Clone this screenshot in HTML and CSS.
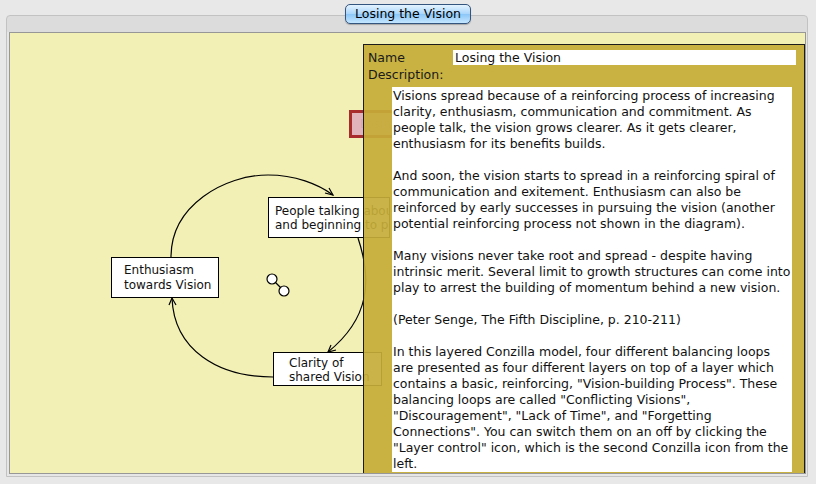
FILE: index.html
```html
<!DOCTYPE html>
<html lang="en">
<head>
<meta charset="UTF-8" />
<title>Losing the Vision</title>
<link rel="stylesheet" href="styles.css">
</head>
<body>
<div class="tab-row">
    <div class="tab">Losing the Vision</div>
</div>
<div class="group">
    <div class="canvas">
        <!-- links drawn in page coordinates -->
        <svg class="links" width="800" height="440">
            <g transform="translate(-10,-33)" fill="none" stroke="#000" stroke-width="1.2">
                <path d="M171,257 C171,205 225,175 268,175 C295,175 318,184 333,195"/>
                <polyline points="325,193 333,195 329,188"/>
                <path d="M358,238 C372,280 370,318 328,352"/>
                <polyline points="331,345 328,352 336,350"/>
                <path d="M273,377 C218,377 174,350 172,298"/>
                <polyline points="176,305 172,298 169,305"/>
                <line x1="272" y1="279" x2="284" y2="291"/>
                <circle cx="272" cy="279" r="5" fill="#fff"/>
                <circle cx="284" cy="291" r="5" fill="#fff"/>
            </g>
        </svg>

        <div class="node n-losing">Losing the Vision</div>
        <div class="node n-people">People talking about it<br>and beginning to pursue it</div>
        <div class="node n-enth">Enthusiasm<br>towards Vision</div>
        <div class="node n-clarity">Clarity of<br>shared Vision</div>

        <div class="info">
            <div class="name-row">
                <span class="label name-label">Name</span>
                <div class="name-field">Losing the Vision</div>
            </div>
            <div class="label">Description:</div>
            <div class="desc">
                <p>Visions spread because of a reinforcing process of increasing<br>clarity, enthusiasm, communication and commitment. As<br>people talk, the vision grows clearer. As it gets clearer,<br>enthusiasm for its benefits builds.</p>
                <p>And soon, the vision starts to spread in a reinforcing spiral of<br>communication and exitement. Enthusiasm can also be<br>reinforced by early successes in pursuing the vision (another<br>potential reinforcing process not shown in the diagram).</p>
                <p>Many visions never take root and spread - despite having<br>intrinsic merit. Several limit to growth structures can come into<br>play to arrest the building of momentum behind a new vision.</p>
                <p>(Peter Senge, The Fifth Discipline, p. 210-211)</p>
                <p>In this layered Conzilla model, four different balancing loops<br>are presented as four different layers on top of a layer which<br>contains a basic, reinforcing, "Vision-building Process". These<br>balancing loops are called "Conflicting Visions",<br>"Discouragement", "Lack of Time", and "Forgetting<br>Connections". You can switch them on an off by clicking the<br>"Layer control" icon, which is the second Conzilla icon from the<br>left.</p>
            </div>
        </div>
    </div>
</div>
</body>
</html>
```

FILE: styles.css
```css
body {
    margin: 0;
    height: 484px;
    overflow: hidden;
    background: #e8e8e8;
    font-family: "DejaVu Sans", "Liberation Sans", sans-serif;
    font-size: 12px;
    color: #111;
}

.tab-row {
    display: flex;
    justify-content: center;
    padding-top: 4px;
    height: 11px;
    position: relative;
    z-index: 2;
}
.tab {
    height: 18px;
    line-height: 18px;
    padding: 0 9px;
    border: 1px solid #34557d;
    border-radius: 5px;
    background: linear-gradient(#e4f3ff, #a9d5fb 50%, #8cc6f7 51%, #c4e6ff);
    color: #000;
    font-size: 12.5px;
    box-shadow: 0 1px 1px rgba(0,0,0,0.25);
}

.group {
    margin: 0 8px 0 6px;
    height: 442px;
    padding: 16px 1px 2px 2px;
    border: 1px solid #c2c2c2;
    border-radius: 4px 4px 0 0;
    background: linear-gradient(#dcdcdc 16px, #e6e6e6 16px);
}

.canvas {
    position: relative;
    height: 440px;
    border: 1px solid #979797;
    background: #f2f0b5;
    overflow: hidden;
}

.links {
    position: absolute;
    left: 0;
    top: 0;
}

.node {
    position: absolute;
    box-sizing: border-box;
    background: #fff;
    border: 1px solid #000;
    line-height: 14px;
    white-space: nowrap;
    overflow: hidden;
}
.n-losing {
    left: 339px;
    top: 77px;
    width: 90px;
    height: 28px;
    border: 3px solid #a92b2b;
    background: #e2b3ba;
    color: #d7a9b0;
    padding: 4px 0 0 8px;
}
.n-people {
    left: 258px;
    top: 164px;
    width: 122px;
    height: 41px;
    padding: 6px 0 0 6px;
}
.n-enth {
    left: 101px;
    top: 224px;
    width: 108px;
    height: 41px;
    padding: 5px 0 0 12px;
    line-height: 15px;
}
.n-clarity {
    left: 263px;
    top: 319px;
    width: 109px;
    height: 34px;
    padding: 3px 0 0 15px;
}

.info {
    position: absolute;
    left: 353px;
    top: 11px;
    right: 0;
    bottom: 0;
    display: flex;
    flex-direction: column;
    padding: 5px 8px 0 4px;
    border: 1px solid #1c1c1c;
    border-bottom: none;
    background: rgba(197, 173, 56, 0.92);
    font-size: 12.5px;
}
.label {
    color: #1a1a1a;
    line-height: 16px;
}
.name-row {
    display: flex;
    height: 15px;
    margin-bottom: 2px;
}
.name-label {
    width: 85px;
    line-height: 15px;
}
.name-field {
    flex: 1;
    background: #fff;
    line-height: 15px;
    padding-left: 2px;
}
.desc {
    flex: 1;
    margin: 4px 4px 1px 24px;
    padding: 1px 0 0 1px;
    background: #fff;
    line-height: 16px;
    white-space: nowrap;
    overflow: hidden;
}
.desc p {
    margin: 0 0 16px;
}
```
